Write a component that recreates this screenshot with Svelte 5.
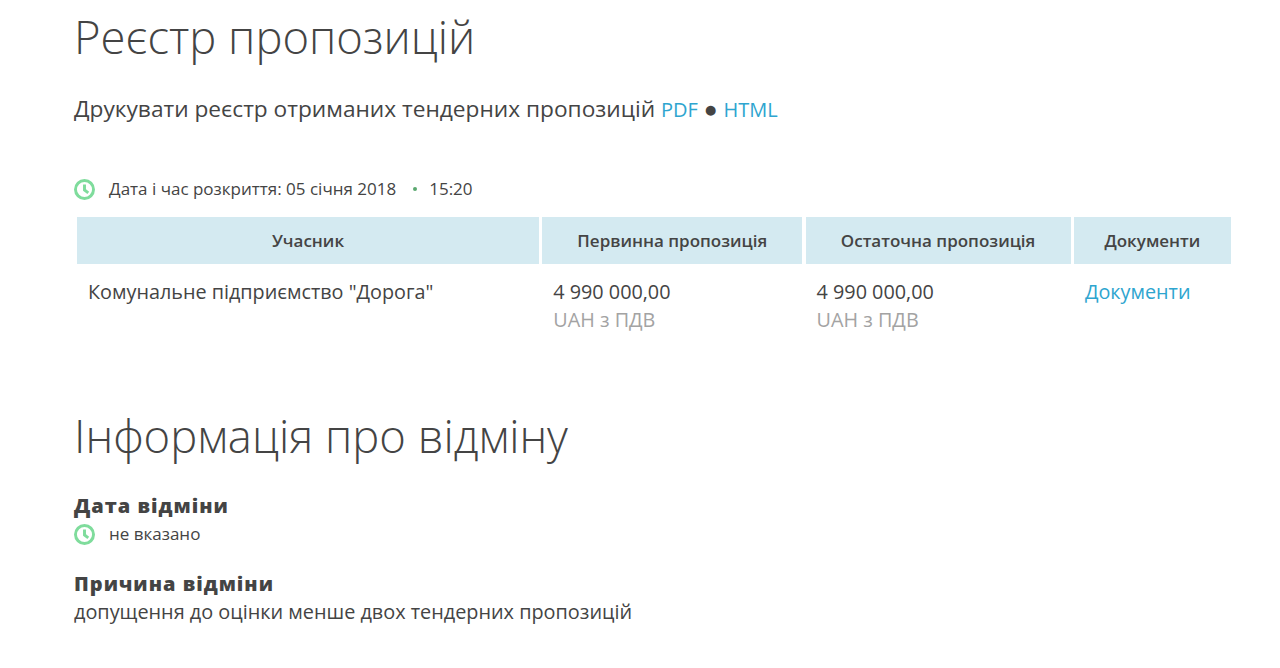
<script>
  const rows = [
    { name: 'Комунальне підприємство "Дорога"', first: "4 990 000,00", last: "4 990 000,00", currency: "UAH з ПДВ" }
  ];
</script>

<div class="page">
  <h1>Реєстр пропозицій</h1>
  <p class="print">
    Друкувати реєстр отриманих тендерних пропозицій <a href="#pdf">PDF</a> <span class="bullet">●</span> <a href="#html">HTML</a>
  </p>

  <div class="opening">
    <svg class="clock" viewBox="0 0 20 20" aria-hidden="true">
      <circle cx="10" cy="10" r="8.6" />
      <path d="M10 5.2V10.4L13.6 13.2" />
    </svg>
    <span>Дата і час розкриття: 05 січня 2018</span>
    <i class="dot"></i>
    <span>15:20</span>
  </div>

  <div class="table">
    <div class="th">Учасник</div>
    <div class="th">Первинна пропозиція</div>
    <div class="th">Остаточна пропозиція</div>
    <div class="th">Документи</div>
    {#each rows as row}
      <div class="td">{row.name}</div>
      <div class="td">{row.first}<small>{row.currency}</small></div>
      <div class="td">{row.last}<small>{row.currency}</small></div>
      <div class="td"><a href="#docs">Документи</a></div>
    {/each}
  </div>

  <h2>Інформація про відміну</h2>

  <h3>Дата відміни</h3>
  <div class="meta">
    <svg class="clock" viewBox="0 0 20 20" aria-hidden="true">
      <circle cx="10" cy="10" r="8.6" />
      <path d="M10 5.2V10.4L13.6 13.2" />
    </svg>
    <span>не вказано</span>
  </div>

  <h3 class="second">Причина відміни</h3>
  <p class="reason">допущення до оцінки менше двох тендерних пропозицій</p>
</div>

<style>
  :global(body) {
    margin: 0;
    background: #fff;
  }

  .page {
    padding: 7px 48px 0 74px;
    font-family: "Open Sans", "Noto Sans", sans-serif;
    color: #444;
    height: 661px;
    overflow: hidden;
  }

  h1,
  h2 {
    margin: 0;
    font-weight: 300;
    font-size: 45.4px;
    line-height: 58px;
    color: #444;
  }

  .print {
    margin: 29px 0 0;
    font-size: 22.7px;
    line-height: 30px;
  }

  a {
    color: #2ea5cf;
    text-decoration: none;
  }

  .print a {
    font-size: 20px;
  }

  .bullet {
    font-size: 23px;
    line-height: 0;
  }

  .opening {
    display: flex;
    align-items: center;
    margin-top: 53px;
    font-size: 17px;
    line-height: 22px;
  }

  .clock {
    width: 21px;
    height: 21px;
    margin-right: 14px;
    flex: none;
    fill: none;
    stroke: #7fdc9c;
    stroke-width: 2.8;
  }

  .dot {
    width: 4px;
    height: 4px;
    margin: 0 12px 0 17px;
    border-radius: 50%;
    background: #5aa86f;
  }

  .table {
    display: grid;
    grid-template-columns: 462px 260px 265px 157px;
    column-gap: 3.3px;
    margin: 17px 0 0 3px;
  }

  .th {
    height: 47px;
    display: flex;
    align-items: center;
    justify-content: center;
    background: #d4eaf1;
    font-size: 17px;
    font-weight: 600;
  }

  .td {
    padding: 14px 11px 0;
    font-size: 19.8px;
    line-height: 28px;
  }

  small {
    display: block;
    font-size: 19.8px;
    color: #a3a3a3;
  }

  h2 {
    margin-top: 72px;
  }

  h3 {
    margin: 28px 0 0;
    font-size: 20px;
    line-height: 28px;
    font-weight: 800;
    letter-spacing: 1px;
  }

  .second {
    margin-top: 22px;
  }

  .meta {
    display: flex;
    align-items: center;
    font-size: 17px;
    line-height: 28px;
  }

  .reason {
    margin: 0;
    font-size: 19.85px;
    line-height: 28px;
  }
</style>
